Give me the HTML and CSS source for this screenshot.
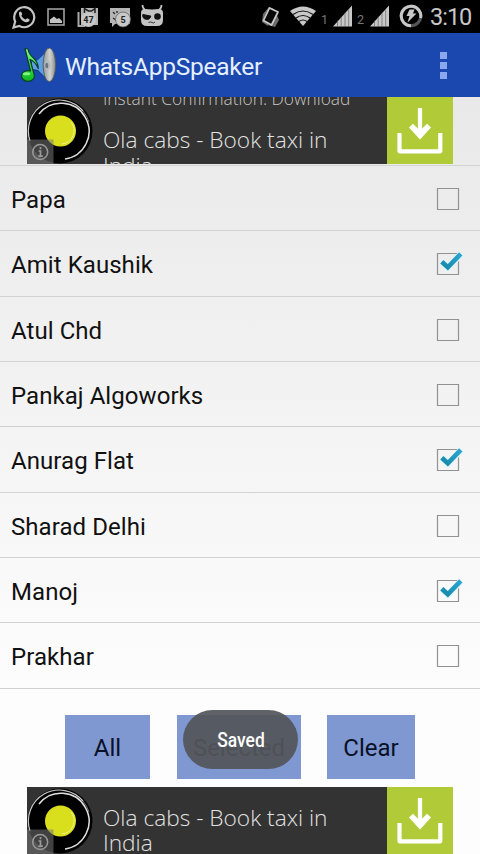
FILE: index.html
```html
<!DOCTYPE html>
<html lang="en">
<head>
<meta charset="utf-8">
<title>WhatsAppSpeaker</title>
<link rel="stylesheet" href="styles.css">
</head>
<body>
<svg class="defs" aria-hidden="true">
  <defs>
    <linearGradient id="tick" x1="0" y1="1" x2="1" y2="0"><stop offset="0" stop-color="#1789aa"/><stop offset="1" stop-color="#2ca5d0"/></linearGradient>
    <linearGradient id="cone" x1="0" x2="1"><stop offset="0" stop-color="#8f9595"/><stop offset=".55" stop-color="#d2d3d0"/><stop offset="1" stop-color="#8d9090"/></linearGradient>
    <linearGradient id="note" x1="0" y1="0" x2="0" y2="1"><stop offset="0" stop-color="#8df58a"/><stop offset=".6" stop-color="#2fd948"/><stop offset="1" stop-color="#10b51c"/></linearGradient>
    <symbol id="box" viewBox="0 0 28 26"><path d="M1.500 2.500h21v21h-21z" fill="none" stroke="#929292" stroke-width="1.200"/></symbol>
    <symbol id="checked" viewBox="0 0 28 26"><path d="M1.500 2.500h21v21h-21z" fill="none" stroke="#929292" stroke-width="1.200"/><path d="M5.300 10.300l6.500 6.500L25.200 3" fill="none" stroke="#dff6fc" stroke-width="6.500"/><path d="M5.800 10.800l6 5.500L24.800 2.800" fill="none" stroke="url(#tick)" stroke-width="4.600"/></symbol>
    <symbol id="disc" viewBox="0 0 66 67">
      <circle cx="33" cy="34" r="32.500" fill="#000"/>
      <path d="M3 44A31 31 0 0 1 56 14" fill="none" stroke="#c9c9c9" stroke-width="1.200"/>
      <path d="M12 17A28 28 0 1 1 38 62" fill="none" stroke="#e0e0e0" stroke-width="1.500"/>
      <path d="M56 14A31 31 0 0 1 62 25" fill="none" stroke="#777" stroke-width="1"/>
      <circle cx="33.500" cy="34" r="15.500" fill="#d9df1c"/>
      <path d="M44 25A13.500 13.500 0 0 1 35 47" fill="none" stroke="#f0f38e" stroke-width="1"/>
      <path d="M0 42.500h26.500V67H0z" fill="#777" fill-opacity=".55"/>
      <circle cx="13.200" cy="55" r="7.500" fill="none" stroke="#999" stroke-width="1.500"/>
      <path d="M13.500 50v2.200M11.500 54h2v5M11.300 59.200h4.500" fill="none" stroke="#999" stroke-width="1.700"/>
    </symbol>
    <symbol id="download" viewBox="0 0 66 67"><path d="M12.500 36v18.300h40.800V36" fill="none" stroke="#fff" stroke-width="4.200" stroke-linejoin="round"/><path d="M33 11v27" stroke="#fff" stroke-width="4.200"/><path d="M22 30.500l4-3.800 7 7 7-7 4 3.800L33 42.500z" fill="#fff"/></symbol>
  </defs>
</svg>
<div class="screen">
  <div class="status">
    <svg class="s-wa" viewBox="0 0 24 24"><path d="M1.500 22.500l1.700-6A10 10 0 1 1 7.300 20.900z" fill="none" stroke="#c4c4c4" stroke-width="2.200"/><path d="M7 7.500c1.500-2 2.500-.8 3.200 1.500.2.700-1 1.300-.8 1.800 1 1.900 2.300 3 4 3.700.7.200 1.200-1.400 1.800-1.300l2.400 1.300c.3 2-2 3-3.800 2.700C10 16.500 6.500 12 7 7.500z" fill="#c4c4c4"/></svg>
    <svg class="s-pic" viewBox="0 0 18 18"><path d="M1 1h16v16H1z" fill="none" stroke="#a9a9a9" stroke-width="1.500"/><path d="M3 15v-3.500l4-3 3 2.500 2-1 3 3V15z" fill="#c4c4c4"/></svg>
    <svg class="s-cal" viewBox="0 0 22 22"><path d="M1.500 6v14H8" fill="none" stroke="#aaa" stroke-width="2"/><path d="M4 2h17v17H4z" fill="#b5b5b5"/><path d="M7.500 7V2.500l4 2.500h3L18 2.500V7" fill="none" stroke="#222" stroke-width="1.500"/><circle cx="11.500" cy="13.500" r="7.500" fill="#c8c8c8"/><text x="11.500" y="16.800" text-anchor="middle" class="badge">47</text></svg>
    <svg class="s-msg" viewBox="0 0 22 22"><path d="M1 2h20v16H6l-3 3v-4H1z" fill="#b5b5b5"/><path d="M4 6l2 2M7 14l-3-2M8 5v2" stroke="#333" stroke-width="1.500"/><circle cx="14" cy="13.500" r="7.500" fill="#c8c8c8" stroke="#555" stroke-width=".7"/><text x="14" y="16.800" text-anchor="middle" class="badge">5</text></svg>
    <svg class="s-cid" viewBox="0 0 24 24"><path d="M2.500 1q0 4 4 5.500M21.500 1q0 4-4 5.500" fill="none" stroke="#c4c4c4" stroke-width="1.800"/><path d="M1 9q0-4 4-4l7 .5 7-.5q4 0 4 4v7q0 6-6 6H7q-6 0-6-6z" fill="#c4c4c4"/><path d="M2.800 10.500l8 1.500a4 4 0 0 1-8-1.500z" fill="#111" stroke="#111"/><circle cx="17.500" cy="12.500" r="3.300" fill="#111"/><path d="M8.500 18.500q2-1.200 3.500 0t3-.5" fill="none" stroke="#333" stroke-width="1"/></svg>
    <span class="spacer"></span>
    <svg class="s-vib" viewBox="0 0 20 24"><path d="M2 9l6-7 5 2-6 17-6-4z" fill="#6b6b6b"/><path d="M14 6l4 9-4 7-7-2z" fill="#6b6b6b"/><path d="M8.500 3l8.500 4-6.500 13-8-4.500z" fill="#070707" stroke="#c8c8c8" stroke-width="1.700" stroke-linejoin="round"/></svg>
    <svg class="s-wifi" viewBox="0 0 26 20"><path d="M0 5Q13-4 26 5L13 20z" fill="#c8c8c8"/><path d="M3 8.500q10-7 20 0M6 12q7-5 14 0M9 15.500q4-3 8 0" fill="none" stroke="#111" stroke-width="1.200"/></svg>
    <span class="sim">1</span>
    <svg class="s-sig" viewBox="0 0 19 21"><path d="M0 21L19 0v21z" fill="#c8c8c8"/><path d="M4.500 15v6M8.200 11v10M12 7v14M15.700 4v17" stroke="#666" stroke-width=".7"/></svg>
    <span class="sim sim2">2</span>
    <svg class="s-sig" viewBox="0 0 19 21"><path d="M0 21L19 0v21z" fill="#c8c8c8"/><path d="M4.500 15v6M8.200 11v10M12 7v14M15.700 4v17" stroke="#666" stroke-width=".7"/></svg>
    <svg class="s-bat" viewBox="0 0 24 24"><circle cx="12" cy="12" r="9.800" fill="none" stroke="#555" stroke-width="3"/><path d="M12 21.800A9.800 9.800 0 1 1 21.600 14" fill="none" stroke="#c8c8c8" stroke-width="3"/><path d="M10.500 5.500h5L14 9.500h3.500l-9 9 2-6.500H7.500z" fill="#c8c8c8"/></svg>
    <span class="clock">3:10</span>
  </div>
  <header class="bar">
    <svg class="logo" viewBox="0 0 40 40">
      <path d="M11 17l9-3L31 1.500q5.500 1 6.500 17 0 16-6 18L20 25l-9-1z" fill="#12386f"/>
      <path d="M14 15.500l6-1.500 9-9v28l-9-9-6-1z" fill="#5c9fe7"/>
      <ellipse cx="31.300" cy="18.800" rx="6.200" ry="16.800" fill="url(#cone)" stroke="#5a6164" stroke-width="1"/>
      <ellipse cx="29.500" cy="19.500" rx="3" ry="5" fill="#b3babd"/><ellipse cx="28.800" cy="19.500" rx="1.500" ry="2.700" fill="#6a757c"/>
      <path d="M7 2.500L10 3Q11 8.500 15.500 12q4.500 4 4.800 10.500Q17 15 12 13.500L16.200 28.500A6.500 5.400 0 1 1 12.500 25z" fill="url(#note)" stroke="#093f25" stroke-width="1.200" stroke-linejoin="round"/>
      <ellipse cx="8.500" cy="27.800" rx="3.700" ry="1.500" fill="#80f680"/>
    </svg>
    <h1>WhatsAppSpeaker</h1>
    <span class="more"><i></i><i></i><i></i></span>
  </header>
  <section class="ad ad-top">
    <svg class="disc"><use href="#disc"/></svg>
    <p class="copy"><span class="sub">Instant Confirmation. Download</span><span class="head">Ola cabs - Book taxi in<br>India</span></p>
    <svg class="get"><use href="#download"/></svg>
  </section>
  <ul class="list">
    <li><span>Papa</span><svg><use href="#box"/></svg></li>
    <li><span>Amit Kaushik</span><svg><use href="#checked"/></svg></li>
    <li><span>Atul Chd</span><svg><use href="#box"/></svg></li>
    <li><span>Pankaj Algoworks</span><svg><use href="#box"/></svg></li>
    <li><span>Anurag Flat</span><svg><use href="#checked"/></svg></li>
    <li><span>Sharad Delhi</span><svg><use href="#box"/></svg></li>
    <li><span>Manoj</span><svg><use href="#checked"/></svg></li>
    <li><span>Prakhar</span><svg><use href="#box"/></svg></li>
  </ul>
  <div class="actions">
    <button class="all">All</button>
    <button class="selected">Selected</button>
    <button class="clear">Clear</button>
    <div class="toast"><span>Saved</span></div>
  </div>
  <section class="ad ad-bottom">
    <svg class="disc"><use href="#disc"/></svg>
    <p class="copy"><span class="head">Ola cabs - Book taxi in<br>India</span></p>
    <svg class="get"><use href="#download"/></svg>
  </section>
</div>
</body>
</html>
```
FILE: styles.css
```css
* { box-sizing: border-box; }
body { margin: 0; font-family: Roboto, "Liberation Sans", sans-serif; }
svg { display: block; flex: none; }
.defs { position: absolute; width: 0; height: 0; }
.screen { width: 480px; height: 854px; overflow: hidden; display: flex; flex-direction: column; background: linear-gradient(#e9e9e9 100px, #f2f2f2 380px, #fdfdfd 690px); }

.status { flex: none; height: 33px; background: #000; display: flex; align-items: flex-start; padding: 0 8px 0 12px; color: #c8c8c8; }
.spacer { flex: 1; }
.s-wa { width: 24px; height: 24px; margin-top: 5px; }
.s-pic { width: 18px; height: 18px; margin: 8px 0 0 11px; }
.s-cal { width: 22px; height: 22px; margin: 6px 0 0 12px; }
.s-msg { width: 22px; height: 22px; margin: 6px 0 0 10px; }
.s-cid { width: 24px; height: 24px; margin: 4px 0 0 9px; }
.badge { font: 700 9px Roboto, sans-serif; fill: #222; }
.s-vib { width: 20px; height: 24px; margin: 5px 9px 0 0; }
.s-wifi { width: 26px; height: 20px; margin-top: 6px; }
.sim { font-size: 12.500px; line-height: 14px; width: 7px; margin: 13px 5px 0 5px; color: #777; }
.sim2 { margin-left: 5px; margin-right: 6px; }
.s-sig { width: 19px; height: 22px; margin-top: 5px; }
.s-bat { width: 24px; height: 24px; margin: 4px 7px 0 10px; }
.clock { font-size: 23.500px; line-height: 34px; width: 42px; white-space: nowrap; letter-spacing: -1px; }

.bar { flex: none; height: 64px; background: #1b48af; display: flex; align-items: center; padding: 0 33px 0 18px; }
.logo { width: 40px; height: 40px; margin-top: 2px; }
h1 { margin: 4px 0 0 7px; font-size: 24.500px; letter-spacing: -.25px; font-weight: 400; line-height: 32px; color: #e5f0ff; flex: 1; }
.more { display: grid; gap: 3px; margin-top: 1px; }
.more i { width: 7px; height: 7px; background: #8ba8ee; }

.ad { flex: none; width: 426px; height: 67px; margin-left: 27px; background: #333; display: flex; overflow: hidden; }
.disc { width: 66px; height: 67px; }
.copy { margin: 0 0 0 10px; flex: 1; min-width: 0; font-family: "Open Sans", sans-serif; font-weight: 300; color: #e2e2e2; white-space: nowrap; }
.sub, .head { display: block; }
.sub { font-size: 17.350px; line-height: 24px; margin-top: -11px; height: 39px; color: #c6c6c6; }
.head { font-size: 22.700px; line-height: 25.500px; }
.ad-top .head { margin-top: 2px; }
.ad-bottom .head { margin-top: 18px; }
.get { width: 66px; height: 67px; background: #b1cb38; }

.list { flex: none; list-style: none; margin: 1px 0 0; padding: 0; border-top: 1px solid #d2d2d2; }
.list li { height: 65.330px; border-bottom: 1px solid #d2d2d2; display: flex; align-items: center; justify-content: space-between; padding: 0 16px 0 11px; font-size: 24px; letter-spacing: .06px; color: #111; }
.list span { margin-top: 4px; }
.list svg { width: 28px; height: 26px; margin-top: 2px; }

.actions { flex: none; height: 64px; margin: 26px 0 8px; position: relative; display: flex; padding-left: 65px; }
button { border: 0; padding: 2px 0 0; margin: 0; background: #7f98d2; font: 24px Roboto, sans-serif; color: #0a1026; height: 64px; }
.all { width: 85px; }
.selected { width: 124px; margin: 0 26px 0 27px; }
.clear { width: 88px; }
.toast { position: absolute; left: 183px; top: -5px; width: 115px; height: 59px; border-radius: 30px; background: rgba(83, 86, 90, .93); display: flex; align-items: center; justify-content: center; color: #fff; }
.toast span { font-size: 20.500px; font-weight: 500; transform: scaleX(.85); margin-top: 1px; }
```
